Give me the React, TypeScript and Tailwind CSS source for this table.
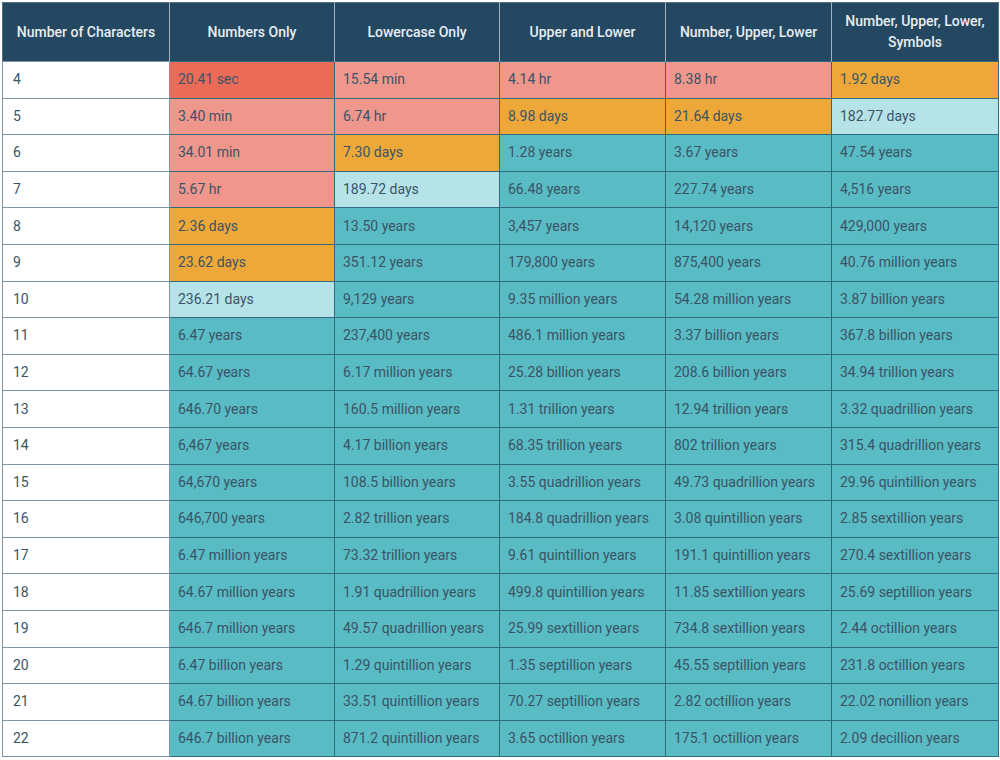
const headers = [
  "Number of Characters",
  "Numbers Only",
  "Lowercase Only",
  "Upper and Lower",
  "Number, Upper, Lower",
  "Number, Upper, Lower, Symbols",
];

type Tone = "red" | "pink" | "orange" | "light" | "teal";

const toneClass: Record<Tone, string> = {
  red: "bg-[#ec6a58]",
  pink: "bg-[#ef978d]",
  orange: "bg-[#eea839]",
  light: "bg-[#b6e3e7]",
  teal: "bg-[#59bbc3]",
};

const rows: { n: number; cells: [string, Tone][] }[] = [
  { n: 4, cells: [["20.41 sec", "red"], ["15.54 min", "pink"], ["4.14 hr", "pink"], ["8.38 hr", "pink"], ["1.92 days", "orange"]] },
  { n: 5, cells: [["3.40 min", "pink"], ["6.74 hr", "pink"], ["8.98 days", "orange"], ["21.64 days", "orange"], ["182.77 days", "light"]] },
  { n: 6, cells: [["34.01 min", "pink"], ["7.30 days", "orange"], ["1.28 years", "teal"], ["3.67 years", "teal"], ["47.54 years", "teal"]] },
  { n: 7, cells: [["5.67 hr", "pink"], ["189.72 days", "light"], ["66.48 years", "teal"], ["227.74 years", "teal"], ["4,516 years", "teal"]] },
  { n: 8, cells: [["2.36 days", "orange"], ["13.50 years", "teal"], ["3,457 years", "teal"], ["14,120 years", "teal"], ["429,000 years", "teal"]] },
  { n: 9, cells: [["23.62 days", "orange"], ["351.12 years", "teal"], ["179,800 years", "teal"], ["875,400 years", "teal"], ["40.76 million years", "teal"]] },
  { n: 10, cells: [["236.21 days", "light"], ["9,129 years", "teal"], ["9.35 million years", "teal"], ["54.28 million years", "teal"], ["3.87 billion years", "teal"]] },
  { n: 11, cells: [["6.47 years", "teal"], ["237,400 years", "teal"], ["486.1 million years", "teal"], ["3.37 billion years", "teal"], ["367.8 billion years", "teal"]] },
  { n: 12, cells: [["64.67 years", "teal"], ["6.17 million years", "teal"], ["25.28 billion years", "teal"], ["208.6 billion years", "teal"], ["34.94 trillion years", "teal"]] },
  { n: 13, cells: [["646.70 years", "teal"], ["160.5 million years", "teal"], ["1.31 trillion years", "teal"], ["12.94 trillion years", "teal"], ["3.32 quadrillion years", "teal"]] },
  { n: 14, cells: [["6,467 years", "teal"], ["4.17 billion years", "teal"], ["68.35 trillion years", "teal"], ["802 trillion years", "teal"], ["315.4 quadrillion years", "teal"]] },
  { n: 15, cells: [["64,670 years", "teal"], ["108.5 billion years", "teal"], ["3.55 quadrillion years", "teal"], ["49.73 quadrillion years", "teal"], ["29.96 quintillion years", "teal"]] },
  { n: 16, cells: [["646,700 years", "teal"], ["2.82 trillion years", "teal"], ["184.8 quadrillion years", "teal"], ["3.08 quintillion years", "teal"], ["2.85 sextillion years", "teal"]] },
  { n: 17, cells: [["6.47 million years", "teal"], ["73.32 trillion years", "teal"], ["9.61 quintillion years", "teal"], ["191.1 quintillion years", "teal"], ["270.4 sextillion years", "teal"]] },
  { n: 18, cells: [["64.67 million years", "teal"], ["1.91 quadrillion years", "teal"], ["499.8 quintillion years", "teal"], ["11.85 sextillion years", "teal"], ["25.69 septillion years", "teal"]] },
  { n: 19, cells: [["646.7 million years", "teal"], ["49.57 quadrillion years", "teal"], ["25.99 sextillion years", "teal"], ["734.8 sextillion years", "teal"], ["2.44 octillion years", "teal"]] },
  { n: 20, cells: [["6.47 billion years", "teal"], ["1.29 quintillion years", "teal"], ["1.35 septillion years", "teal"], ["45.55 septillion years", "teal"], ["231.8 octillion years", "teal"]] },
  { n: 21, cells: [["64.67 billion years", "teal"], ["33.51 quintillion years", "teal"], ["70.27 septillion years", "teal"], ["2.82 octillion years", "teal"], ["22.02 nonillion years", "teal"]] },
  { n: 22, cells: [["646.7 billion years", "teal"], ["871.2 quintillion years", "teal"], ["3.65 octillion years", "teal"], ["175.1 octillion years", "teal"], ["2.09 decillion years", "teal"]] },
];

export default function App() {
  return (
    <div className="w-[1000px] h-[760px] bg-white pl-[2px] pt-[2px] font-['Roboto',sans-serif]">
      <table className="w-[996px] table-fixed border-collapse border border-[#4f7286] text-[14px] text-[#3a5467]">
        <colgroup>
          <col className="w-[167px]" />
          <col className="w-[165px]" />
          <col className="w-[165px]" />
          <col className="w-[166px]" />
          <col className="w-[166px]" />
          <col className="w-[167px]" />
        </colgroup>
        <thead>
          <tr className="h-[59px] bg-[#244862]">
            {headers.map((h, i) => (
              <th
                key={h}
                className={`px-2 text-center font-medium leading-[21px] text-[#e6edf1] ${
                  i > 0 ? "border-l border-[#9fb1bd]" : ""
                }`}
              >
                {h}
              </th>
            ))}
          </tr>
        </thead>
        <tbody>
          {rows.map((r) => (
            <tr key={r.n} className="h-[36.6px]">
              <td className="border border-[#7d95a5] bg-white pl-[10px]">{r.n}</td>
              {r.cells.map(([v, t], i) => (
                <td
                  key={i}
                  className={`border border-[#2f6a7e] pl-[8px] ${toneClass[t]}`}
                >
                  {v}
                </td>
              ))}
            </tr>
          ))}
        </tbody>
      </table>
    </div>
  );
}
